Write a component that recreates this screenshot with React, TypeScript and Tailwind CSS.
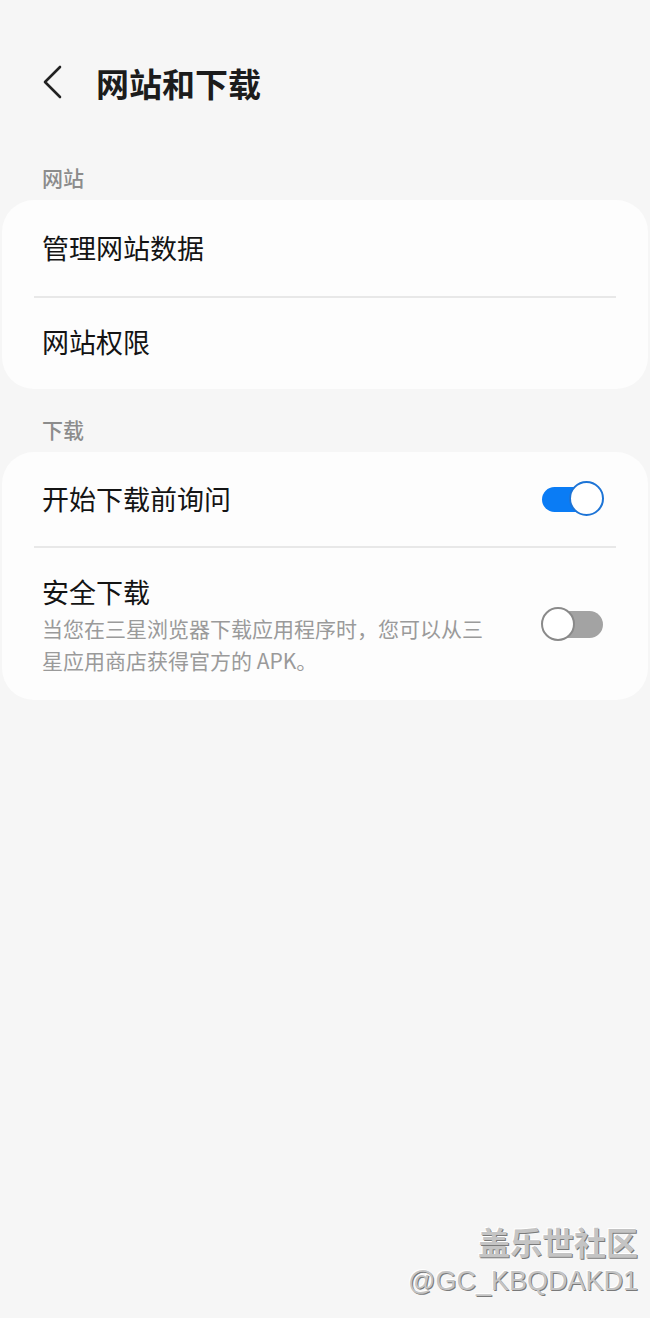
const font = { fontFamily: '"Noto Sans CJK SC", "Noto Sans", sans-serif' };

function Toggle({ on }: { on: boolean }) {
  return (
    <div className="relative h-[36px] w-[62px] shrink-0">
      <div
        className={
          on
            ? "absolute left-0 right-[2px] top-[6px] h-[25px] rounded-full bg-[#0a7cf5]"
            : "absolute left-[2px] right-0 top-[5px] h-[27px] rounded-full bg-[#a3a3a3]"
        }
      />
      <div
        className={
          on
            ? "absolute right-0 top-0 h-[35px] w-[35px] rounded-full border-2 border-[#1d74d6] bg-white"
            : "absolute left-0 top-[1px] h-[34px] w-[34px] rounded-full border-2 border-[#8a8a8a] bg-white"
        }
      />
    </div>
  );
}

export default function App() {
  return (
    <div className="relative min-h-[1318px] bg-[#f6f6f6]" style={font}>
      <header className="flex h-[166px] items-start pt-[60px]">
        <div className="flex w-[96px] justify-start pl-[40px] pt-[4px]">
          <svg width="26" height="36" viewBox="0 0 26 36" fill="none">
            <path d="M20 3 L5 18 L20 33" stroke="#222" strokeWidth="2.6" strokeLinecap="round" strokeLinejoin="round" />
          </svg>
        </div>
        <h1 className="text-[33px] font-bold leading-[46px] text-[#1c1c1c]">网站和下载</h1>
      </header>

      <div className="px-[42px] pb-[12px] text-[21px] font-medium leading-[22px] text-[#8c8c8c]">网站</div>
      <section className="mx-[2px] rounded-[32px] bg-[#fdfdfd]">
        <div className="flex h-[96px] items-center px-[40px] text-[27px] text-[#141414]">管理网站数据</div>
        <div className="mx-[32px] h-[2px] bg-[#e8e8e8]" />
        <div className="flex h-[91px] items-center px-[40px] pb-[2px] text-[27px] text-[#141414]">网站权限</div>
      </section>

      <div className="px-[42px] pb-[12px] pt-[29px] text-[21px] font-medium leading-[22px] text-[#8c8c8c]">下载</div>
      <section className="mx-[2px] rounded-[32px] bg-[#fdfdfd]">
        <div className="flex h-[94px] items-center justify-between pl-[40px] pr-[44px]">
          <span className="text-[27px] text-[#141414]">开始下载前询问</span>
          <Toggle on />
        </div>
        <div className="mx-[32px] h-[2px] bg-[#e8e8e8]" />
        <div className="flex h-[152px] items-center justify-between pl-[40px] pr-[45px]">
          <div className="w-[450px] pt-[2px]">
            <div className="text-[27px] leading-[36px] text-[#141414]">安全下载</div>
            <div className="mt-[2px] text-[21px] leading-[32px] text-[#9a9a9a]">
              当您在三星浏览器下载应用程序时，您可以从三星应用商店获得官方的 APK。
            </div>
          </div>
          <Toggle on={false} />
        </div>
      </section>

      <div className="absolute bottom-[18px] right-[12px] flex flex-col items-end text-[#c4c4c4]">
        <div
          className="text-[32px] font-bold leading-[42px]"
          style={{ textShadow: "1px 1px 0 #7a7a7a, -1px -1px 0 #ffffff" }}
        >
          盖乐世社区
        </div>
        <div
          className="text-[27px] leading-[38px]"
          style={{ fontFamily: '"Liberation Sans", sans-serif', textShadow: "1px 1px 0 #7a7a7a, -1px -1px 0 #ffffff" }}
        >
          @GC_KBQDAKD1
        </div>
      </div>
    </div>
  );
}
